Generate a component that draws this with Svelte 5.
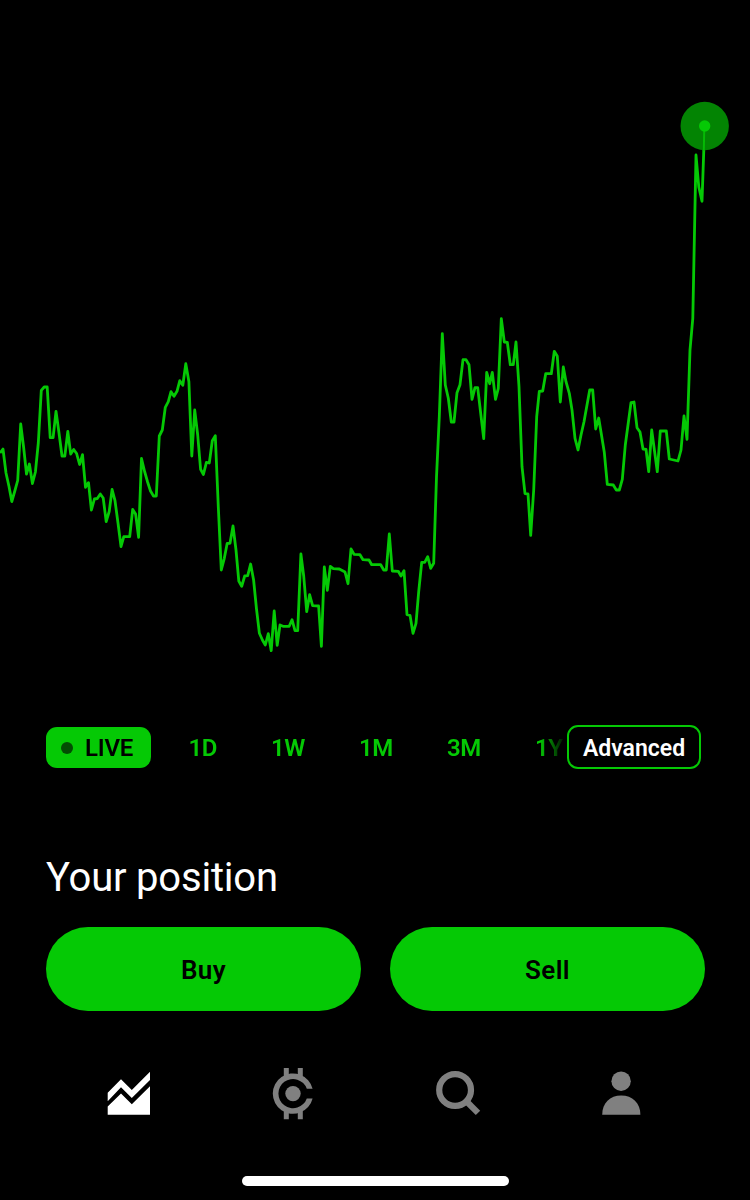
<script lang="ts">
  type Point = [number, number];

  const ranges = ["1D", "1W", "1M", "3M", "1Y"];

  const prices: Point[] = [
    [0, 453], [3, 449], [6, 473], [9, 486.5], [11.8, 501.5], [14.8, 491], [17.7, 480.5], [20.7, 424],
    [23.7, 448], [26.5, 474], [29.4, 464], [32.4, 483.5], [35.4, 472], [38.3, 443], [41.3, 390.3],
    [44.2, 387], [47.2, 387], [50.2, 437.7], [53.1, 437.7], [56, 411.3], [59, 433], [62, 456],
    [64.8, 456], [67.8, 431.5], [70.7, 454], [73.7, 449.5], [76.6, 453.5], [79.6, 464.5], [82.5, 454.7],
    [85.5, 487.3], [88.5, 482.6], [91.4, 510], [94.4, 499], [97.3, 498.5], [100.3, 494], [103.2, 498],
    [106.2, 521.5], [109.2, 511.5], [112.1, 489.5], [115, 500.7], [118, 523], [121, 546.5], [123.8, 536.7],
    [129.7, 536.7], [132.7, 509.4], [135.6, 514], [138.6, 537.3], [141.5, 458.5], [144.6, 471.5],
    [147.5, 481.7], [150.5, 491], [153.5, 496], [156.3, 496], [159.3, 436], [162.3, 430], [165.3, 407.3],
    [168.3, 401.7], [171, 391.7], [174, 396.3], [177, 391.3], [179.8, 380.7], [182.8, 385.3],
    [185.8, 363.7], [188.9, 381.7], [191.8, 456], [194.7, 410], [197.7, 435], [200.6, 469.3],
    [203.4, 474.5], [206.4, 462.3], [209.3, 463], [212.3, 440.7], [215.3, 435.7], [218.3, 506.7],
    [221.3, 570], [224.3, 558.3], [227.2, 543.3], [230, 543.3], [233, 526], [236, 550], [238.8, 581],
    [241.7, 586.3], [244.7, 576], [247.7, 575.7], [250.6, 564], [253.6, 580], [256.5, 609],
    [259.4, 633.3], [262.4, 640], [265.3, 645], [268.3, 633.7], [271.2, 650.7], [274.2, 611],
    [277.2, 645.3], [280, 625], [283, 626.3], [289.2, 626.3], [292, 619.7], [295, 630.7], [297.7, 630.7],
    [300.9, 554], [303.7, 576], [306.7, 611.7], [309.6, 594.7], [312.6, 605.7], [318.6, 606],
    [321.4, 646.3], [324.3, 567], [327.3, 590.3], [330.3, 566.3], [333.3, 568.7], [339.3, 569],
    [345, 572], [348, 583.7], [351, 549], [354, 554.3], [360, 554.7], [363, 559.7], [369, 560],
    [371.7, 564.7], [380.7, 564.7], [383.7, 570], [386.3, 570], [389.3, 534], [392.3, 571],
    [398.3, 571.3], [401, 576], [404, 570.7], [407, 614.7], [410, 615.3], [413, 633.3], [416, 623.3],
    [418.7, 591.7], [421.7, 562.3], [424.7, 562.3], [427.7, 556.7], [430.7, 568.3], [433.7, 563.3],
    [436.5, 477], [439.3, 416.7], [442.3, 333.7], [445.3, 385], [448.3, 398.3], [451.3, 422],
    [454, 422], [457, 392.7], [460, 384.7], [463, 359.7], [466, 359.7], [469, 364.7], [472, 399.3],
    [475, 387.7], [477.7, 387.7], [480.7, 413.3], [483.7, 438.7], [486.7, 372.3], [489.7, 383.7],
    [492.3, 372.3], [495.5, 399.3], [498.3, 388.3], [501.3, 318.7], [504.3, 342], [507.3, 342.3],
    [510.3, 364.7], [513.3, 364.7], [516, 342], [519, 386.7], [522, 466.7], [525, 493.7], [528, 494],
    [530.7, 535.3], [533.7, 490], [536.7, 416.7], [539.3, 391.3], [542.7, 391], [545.7, 373.7],
    [551.3, 373.7], [554.3, 351.3], [557.3, 356.3], [560.3, 402], [563.3, 367], [566, 381.7],
    [569.3, 393.3], [572, 410], [575, 438.3], [578, 450], [581, 435], [584, 421.7], [589.7, 390],
    [592.7, 390], [595.7, 429], [598.7, 418], [604.3, 452.3], [607.3, 484.3], [613.3, 485],
    [616.3, 490], [619.3, 490], [622.3, 479.3], [625.3, 445], [631, 402.7], [634, 402], [637, 427.7],
    [640, 432], [643, 449], [646, 449.3], [648.7, 471.7], [651.7, 430], [657.3, 471.7], [660.3, 431],
    [666.3, 431], [669.3, 459], [678, 461], [681, 450], [684, 416], [687, 439.3], [690, 350],
    [692.8, 318.3], [696, 155], [698.8, 187], [702, 201.3], [703.8, 150],
  ];

  const line = prices.map((p) => p.join(",")).join(" ");
</script>

<main>
  <svg class="chart" viewBox="0 0 750 700">
    <polyline points={line} />
    <circle class="pulse" cx="704.7" cy="126" r="24.2" />
    <path class="tail" d="M704.3 126L703.8 151" />
    <circle class="dot" cx="704.7" cy="126" r="5.7" />
  </svg>

  <div class="range-bar">
    <div class="ranges">
      <button class="live"><span class="live-dot"></span><span>LIVE</span></button>
      {#each ranges as range}
        <button class="range">{range}</button>
      {/each}
    </div>
    <button class="advanced">Advanced</button>
  </div>

  <h2>Your position</h2>

  <div class="actions">
    <button>Buy</button>
    <button>Sell</button>
  </div>

  <nav>
    <a class="active" href="#portfolio" aria-label="Portfolio">
      <svg viewBox="0 0 54 54">
        <path d="M5.7 32.3V23.7L19 10.3L29.8 21L48 2.7V11L29.8 29L19 18.3Z" />
        <path d="M5.7 45.7V37.5L19 24.6L29.8 35.3L48 17.3V45.7Z" />
      </svg>
    </a>
    <a href="#crypto" aria-label="Crypto">
      <svg viewBox="0 0 54 54">
        <circle cx="27" cy="24.6" r="7.7" />
        <path d="M46.6 19.8A20.2 20.2 0 1 0 46.6 29.4H40.8A14.6 14.6 0 1 1 40.8 19.8Z" />
        <path d="M17.8 -1H22.8V8H17.8ZM31.8 -1H36.8V8H31.8ZM17.8 41H22.8V50.2H17.8ZM31.8 41H36.8V50.2H31.8Z" />
      </svg>
    </a>
    <a href="#search" aria-label="Search">
      <svg viewBox="0 0 54 54">
        <circle class="lens" cx="25.1" cy="21" r="15.9" />
        <path class="handle" d="M35.3 31.2L48 43.9" />
      </svg>
    </a>
    <a href="#account" aria-label="Account">
      <svg viewBox="0 0 54 54">
        <circle cx="27.1" cy="12.2" r="9.7" />
        <path d="M8.2 45.7C8.2 34 16 26.5 27.2 26.5S46.4 34 46.4 45.7Z" />
      </svg>
    </a>
  </nav>

  <div class="home-indicator"></div>
</main>

<style>
  :global(body) {
    margin: 0;
    background: #000;
  }

  main {
    --green: #05c905;
    display: flex;
    flex-direction: column;
    width: 750px;
    height: 1200px;
    overflow: hidden;
    background: #000;
    color: #fff;
    font-family: Roboto, "Liberation Sans", sans-serif;
  }

  button {
    margin: 0;
    padding: 0;
    border: 0;
    background: none;
    color: inherit;
    font: inherit;
    white-space: nowrap;
  }

  .chart {
    flex: none;
    display: block;
    width: 750px;
    height: 700px;

    & polyline {
      fill: none;
      stroke: var(--green);
      stroke-width: 2.8;
      stroke-linejoin: round;
    }

    & .pulse {
      fill: #038403;
    }

    & .tail {
      fill: none;
      stroke: #05b905;
      stroke-width: 2;
    }

    & .dot {
      fill: var(--green);
    }
  }

  .range-bar {
    display: flex;
    align-items: center;
    height: 44px;
    margin: 25px 49px 0 46px;
    font-size: 24px;
    font-weight: 600;
  }

  .ranges {
    display: flex;
    flex: none;
    gap: 54px;
    align-items: center;
    width: 521px;
    color: var(--green);
    mask-image: linear-gradient(to right, #000 494px, transparent 520px);
  }

  .live {
    display: flex;
    flex: none;
    align-items: center;
    gap: 12px;
    box-sizing: border-box;
    width: 105px;
    height: 41px;
    margin-right: -16.5px;
    padding: 1px 0 0 15px;
    border-radius: 11px;
    background: var(--green);
    color: #000;
    letter-spacing: -0.2px;
  }

  .live-dot {
    width: 12px;
    height: 12px;
    border-radius: 50%;
    background: #034d03;
  }

  .range {
    flex: none;
    padding-top: 2px;
    letter-spacing: -0.4px;
  }

  .advanced {
    flex: none;
    box-sizing: border-box;
    width: 134px;
    height: 44px;
    padding-top: 2px;
    border: 2px solid var(--green);
    border-radius: 11px;
    font-size: 23px;
  }

  h2 {
    margin: 84px 0 0 46px;
    font-size: 40px;
    font-weight: 400;
    line-height: 50px;
    letter-spacing: -0.2px;
  }

  .actions {
    display: flex;
    gap: 29px;
    margin: 24px 45px 0 46px;

    & button {
      flex: 1;
      height: 84px;
      padding-top: 2px;
      border-radius: 42px;
      background: var(--green);
      color: #000;
      font-size: 26px;
      font-weight: 600;
      letter-spacing: 0.4px;
    }
  }

  nav {
    display: flex;
    justify-content: space-between;
    margin: 58px 102px 0;

    & a {
      display: block;
      width: 54px;
      height: 54px;
      color: #808080;
    }

    & a.active {
      color: #fff;
    }

    & svg {
      display: block;
      width: 54px;
      height: 54px;
      fill: currentColor;
      overflow: visible;
    }

    & .lens,
    & .handle {
      fill: none;
      stroke: currentColor;
      stroke-width: 6.2;
    }
  }

  .home-indicator {
    width: 267px;
    height: 10px;
    margin: 53px 0 0 242px;
    border-radius: 5px;
    background: #fff;
  }
</style>
